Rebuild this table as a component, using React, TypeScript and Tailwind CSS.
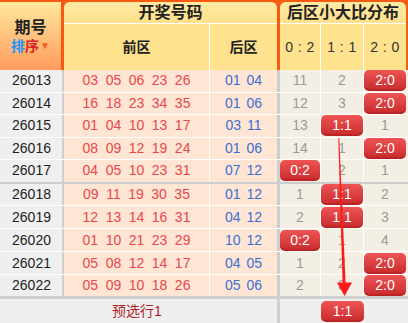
type Row = {
  id: string;
  front: string[];
  back: string[];
  dist: string[];
  hit: number;
};

const rows: Row[] = [
  { id: "26013", front: ["03", "05", "06", "23", "26"], back: ["01", "04"], dist: ["11", "2", "2:0"], hit: 2 },
  { id: "26014", front: ["16", "18", "23", "34", "35"], back: ["01", "06"], dist: ["12", "3", "2:0"], hit: 2 },
  { id: "26015", front: ["01", "04", "10", "13", "17"], back: ["03", "11"], dist: ["13", "1:1", "1"], hit: 1 },
  { id: "26016", front: ["08", "09", "12", "19", "24"], back: ["01", "06"], dist: ["14", "1", "2:0"], hit: 2 },
  { id: "26017", front: ["04", "05", "10", "23", "31"], back: ["07", "12"], dist: ["0:2", "2", "1"], hit: 0 },
  { id: "26018", front: ["09", "11", "19", "30", "35"], back: ["01", "12"], dist: ["1", "1:1", "2"], hit: 1 },
  { id: "26019", front: ["12", "13", "14", "16", "31"], back: ["04", "12"], dist: ["2", "1:1", "3"], hit: 1 },
  { id: "26020", front: ["01", "10", "21", "23", "29"], back: ["10", "12"], dist: ["0:2", "1", "4"], hit: 0 },
  { id: "26021", front: ["05", "08", "12", "14", "17"], back: ["04", "05"], dist: ["1", "2", "2:0"], hit: 2 },
  { id: "26022", front: ["05", "09", "10", "18", "26"], back: ["05", "06"], dist: ["2", "3", "2:0"], hit: 2 },
];

const distWidths = ["w-[41px] border-r border-white", "w-[43px] border-r border-white", "w-[42px]"];

function rowClass(i: number) {
  if (i === 4) return "h-[23.5px] border-b-2 border-[#cdcdcd]";
  if (i === 9) return "h-[24px] border-b-[3px] border-[#d0d0d0]";
  if (i < 4) return "h-[22.5px] border-b border-white";
  return "h-[22.9px] border-b border-white";
}

function Pill({ label }: { label: string }) {
  return (
    <span className="flex h-[21px] w-full items-center justify-center rounded-[5px] bg-linear-to-b from-[#ef5454] to-[#c8292b] text-[14px] text-white shadow-[inset_0_-2px_0_rgba(120,0,0,0.18)]">
      {label}
    </span>
  );
}

export default function App() {
  return (
    <div
      className="relative flex h-[323px] w-[408px] flex-col overflow-hidden bg-[#f4efe4] text-[14px]"
      style={{ fontFamily: '"Liberation Sans", "Noto Sans CJK SC", sans-serif' }}
    >
      {/* header */}
      <div className="flex h-[70px] shrink-0 bg-[#f75a12] pt-[2px] pr-[2px]">
        <div className="flex w-[61px] flex-col items-center justify-center bg-linear-to-b from-[#ffe89c] to-[#ff9b5c] pt-[1px]">
          <span className="text-[16px] font-bold leading-[19px] text-[#222]">期号</span>
          <span className="flex items-center text-[14px] font-bold leading-[18px]">
            <span className="text-[#1e95ff]">排</span>
            <span className="text-[#d42222]">序</span>
            <span className="ml-[1px] text-[10px] text-[#ff5a1f]">▼</span>
          </span>
        </div>
        <div className="ml-[3px] flex w-[213px] flex-col overflow-hidden rounded-t-[6px] bg-[#ffe28d]">
          <div className="flex h-[22px] items-center justify-center border-b border-white bg-linear-to-b from-[#ffeaa4] to-[#ffe08a] text-[16px] font-bold text-[#222]">
            开奖号码
          </div>
          <div className="flex flex-1 text-[14px] font-bold text-[#222]">
            <div className="flex w-[146px] items-center justify-center border-r border-white">前区</div>
            <div className="flex flex-1 items-center justify-center">后区</div>
          </div>
        </div>
        <div className="ml-[3px] flex w-[126px] flex-col overflow-hidden rounded-t-[6px] bg-[#ffe28d]">
          <div className="flex h-[22px] items-center justify-center border-b border-white bg-linear-to-b from-[#ffeaa4] to-[#ffe08a] text-[16px] font-bold text-[#222]">
            后区小大比分布
          </div>
          <div className="flex flex-1 text-[14px] text-[#333]">
            {["0 : 2", "1 : 1", "2 : 0"].map((t, k) => (
              <div key={t} className={`flex items-center justify-center tracking-[0.5px] ${distWidths[k]}`}>
                {t}
              </div>
            ))}
          </div>
        </div>
      </div>

      {/* body */}
      {rows.map((r, i) => (
        <div key={r.id} className={`flex shrink-0 ${rowClass(i)}`}>
          <div className="flex w-[64px] items-center justify-center border-r-2 border-[#cdcdcd] bg-[#efefef] pl-[1px] text-[#222]">
            {r.id}
          </div>
          <div className="flex w-[146px] items-center justify-center gap-[7.5px] border-r border-white bg-[#ffe5d3] text-[#e8474b]">
            {r.front.map((n, k) => (
              <span key={k}>{n}</span>
            ))}
          </div>
          <div className="flex w-[70px] items-center justify-center gap-[6px] border-r-[3px] border-[#cdcdcd] bg-[#ffe5d3] text-[#3b6fd6]">
            {r.back.map((n, k) => (
              <span key={k}>{n}</span>
            ))}
          </div>
          {r.dist.map((d, k) => (
            <div key={k} className={`flex items-center justify-center text-[#9a9a9a] ${distWidths[k]}`}>
              {k === r.hit ? <Pill label={d} /> : d}
            </div>
          ))}
        </div>
      ))}

      {/* footer */}
      <div className="flex flex-1 bg-[#efefef]">
        <div className="w-[64px]" />
        <div className="flex w-[146px] items-center justify-center text-[#b01f1f]">预选行1</div>
        <div className="w-[70px] border-r-[3px] border-[#d0d0d0]" />
        <div className="w-[41px]" />
        <div className="flex w-[43px] items-center pt-[1px]">
          <Pill label="1:1" />
        </div>
        <div className="flex-1" />
      </div>

      {/* trend arrow */}
      <svg className="pointer-events-none absolute left-0 top-0" width="408" height="323" viewBox="0 0 408 323">
        <polygon points="338.3,138 339.3,138 345.6,284 342.6,284" fill="#ff1a1a" />
        <polygon points="337,282.5 352,282.5 344.6,296" fill="#ff1a1a" />
      </svg>
    </div>
  );
}
